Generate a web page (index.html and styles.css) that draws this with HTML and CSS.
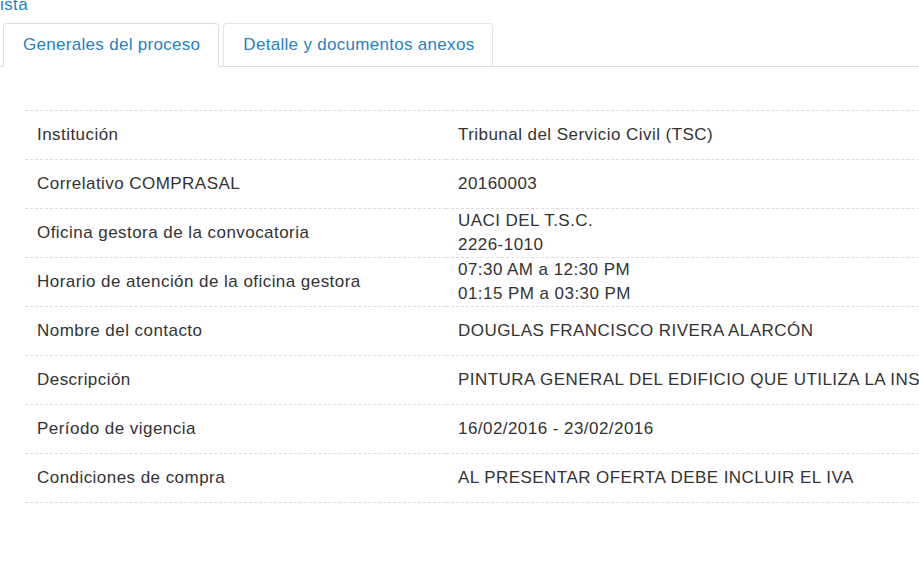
FILE: index.html
```html
<!DOCTYPE html>
<html lang="es">
<head>
<meta charset="utf-8">
<title>Generales del proceso</title>
<link rel="stylesheet" href="styles.css">
</head>
<body>
<a class="back" href="#">Lista</a>
<ul class="tabs">
  <li class="tab active"><a href="#">Generales del proceso</a></li>
  <li class="tab"><a href="#">Detalle y documentos anexos</a></li>
</ul>
<table class="info">
  <tbody>
    <tr><td class="label">Institución</td><td>Tribunal del Servicio Civil (TSC)</td></tr>
    <tr><td class="label">Correlativo COMPRASAL</td><td>20160003</td></tr>
    <tr><td class="label">Oficina gestora de la convocatoria</td><td>UACI DEL T.S.C.<br>2226-1010</td></tr>
    <tr><td class="label">Horario de atención de la oficina gestora</td><td>07:30 AM a 12:30 PM<br>01:15 PM a 03:30 PM</td></tr>
    <tr><td class="label">Nombre del contacto</td><td>DOUGLAS FRANCISCO RIVERA ALARCÓN</td></tr>
    <tr><td class="label">Descripción</td><td>PINTURA GENERAL DEL EDIFICIO QUE UTILIZA LA INSTITUCIÓN</td></tr>
    <tr><td class="label">Período de vigencia</td><td>16/02/2016 - 23/02/2016</td></tr>
    <tr><td class="label">Condiciones de compra</td><td>AL PRESENTAR OFERTA DEBE INCLUIR EL IVA</td></tr>
  </tbody>
</table>
</body>
</html>
```
FILE: styles.css
```css
html, body {
  margin: 0;
  padding: 0;
  overflow: hidden;
  background: #fff;
}
body {
  font-family: "Liberation Sans", Arial, sans-serif;
  font-size: 17px;
  letter-spacing: 0.45px;
  color: #333;
  line-height: 24px;
}
a {
  color: #2a7fbf;
  text-decoration: none;
}
.back {
  display: block;
  margin: -7px 0 0 -10px;
  line-height: 24px;
  height: 15px;
}
.tabs {
  list-style: none;
  margin: 15px 0 0 0;
  padding: 0 0 0 3px;
  display: flex;
  border-bottom: 1px solid #ddd;
}
.tab {
  margin: 0 4px -1px 0;
  border: 1px solid #e3e3e3;
  border-radius: 4px 4px 0 0;
  border-bottom-color: #ddd;
}
.tab a {
  display: block;
  padding: 10px 18px 10px 19px;
  line-height: 22px;
  letter-spacing: 0.3px;
}
.tab.active {
  border-color: #ddd;
  border-bottom-color: #fff;
  background: #fff;
}
.info {
  margin: 43px 0 0 25px;
  width: 1300px;
  border-collapse: collapse;
}
.info td {
  height: 48px;
  padding: 0 12px;
  vertical-align: middle;
  border-top: 1px dashed #ddd;
  border-bottom: 1px dashed #ddd;
  white-space: nowrap;
}
.info td.label {
  width: 397px;
}
```
